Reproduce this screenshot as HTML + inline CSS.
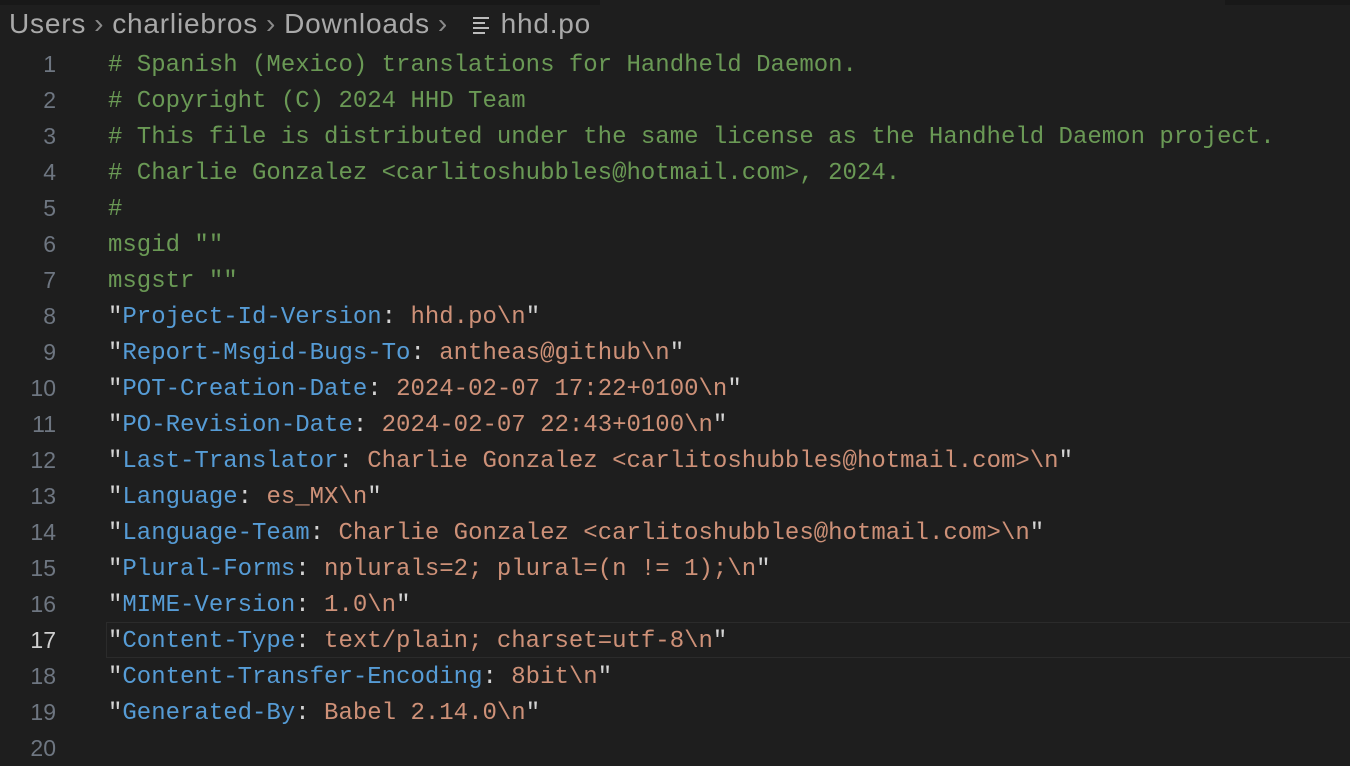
<!DOCTYPE html>
<html><head><style>
html,body{margin:0;padding:0;background:#1e1e1e;width:1350px;height:740px;overflow:hidden}
.bc{position:absolute;top:7px;left:9px;font:28px "Liberation Sans",sans-serif;letter-spacing:0.8px;color:#a9a9a9;white-space:nowrap;height:34px;line-height:34px}
.bc .s{color:#8a8a8a;margin:0 8px 0 8px}
.ln{position:absolute;left:0;width:56px;text-align:right;font:23px "Liberation Sans",sans-serif;color:#6e7681;line-height:36px}
.code{position:absolute;left:108px;font:24px "Liberation Mono",monospace;line-height:36px;white-space:pre;color:#d4d4d4}
.c{color:#6a9955}.k{color:#569cd6}.v{color:#ce9178}
.hl{position:absolute;left:106px;right:0;top:622px;height:34px;border:1px solid #2b2b2b;border-right:none}
</style></head><body>
<div style="position:absolute;top:0;left:0;width:600px;height:5px;background:#181818"></div>
<div style="position:absolute;top:0;left:1225px;width:125px;height:5px;background:#181818"></div>
<div class="bc">Users<span class="s">›</span>charliebros<span class="s">›</span>Downloads<span class="s">›</span> <span style="display:inline-block;width:16px;vertical-align:middle;margin:0 12px 0 8px"><span style="display:block;height:2px;background:#bbb;margin:3px 0;width:16px"></span><span style="display:block;height:2px;background:#bbb;margin:3px 0;width:12px"></span><span style="display:block;height:2px;background:#bbb;margin:3px 0;width:16px"></span><span style="display:block;height:2px;background:#bbb;margin:3px 0;width:12px"></span></span>hhd.po</div>
<div class="hl"></div>
<div class="ln" style="top:46px">1<br>2<br>3<br>4<br>5<br>6<br>7<br>8<br>9<br>10<br>11<br>12<br>13<br>14<br>15<br>16<br><span style="color:#d0d0d0">17</span><br>18<br>19<br>20</div>
<div class="code" style="top:48px"><span class="c"># Spanish (Mexico) translations for Handheld Daemon.
# Copyright (C) 2024 HHD Team
# This file is distributed under the same license as the Handheld Daemon project.
# Charlie Gonzalez &lt;carlitoshubbles@hotmail.com&gt;, 2024.
#
msgid ""
msgstr ""</span>
"<span class="k">Project-Id-Version</span>: <span class="v">hhd.po\n</span>"
"<span class="k">Report-Msgid-Bugs-To</span>: <span class="v">antheas@github\n</span>"
"<span class="k">POT-Creation-Date</span>: <span class="v">2024-02-07 17:22+0100\n</span>"
"<span class="k">PO-Revision-Date</span>: <span class="v">2024-02-07 22:43+0100\n</span>"
"<span class="k">Last-Translator</span>: <span class="v">Charlie Gonzalez &lt;carlitoshubbles@hotmail.com&gt;\n</span>"
"<span class="k">Language</span>: <span class="v">es_MX\n</span>"
"<span class="k">Language-Team</span>: <span class="v">Charlie Gonzalez &lt;carlitoshubbles@hotmail.com&gt;\n</span>"
"<span class="k">Plural-Forms</span>: <span class="v">nplurals=2; plural=(n != 1);\n</span>"
"<span class="k">MIME-Version</span>: <span class="v">1.0\n</span>"
"<span class="k">Content-Type</span>: <span class="v">text/plain; charset=utf-8\n</span>"
"<span class="k">Content-Transfer-Encoding</span>: <span class="v">8bit\n</span>"
"<span class="k">Generated-By</span>: <span class="v">Babel 2.14.0\n</span>"</div>
</body></html>
